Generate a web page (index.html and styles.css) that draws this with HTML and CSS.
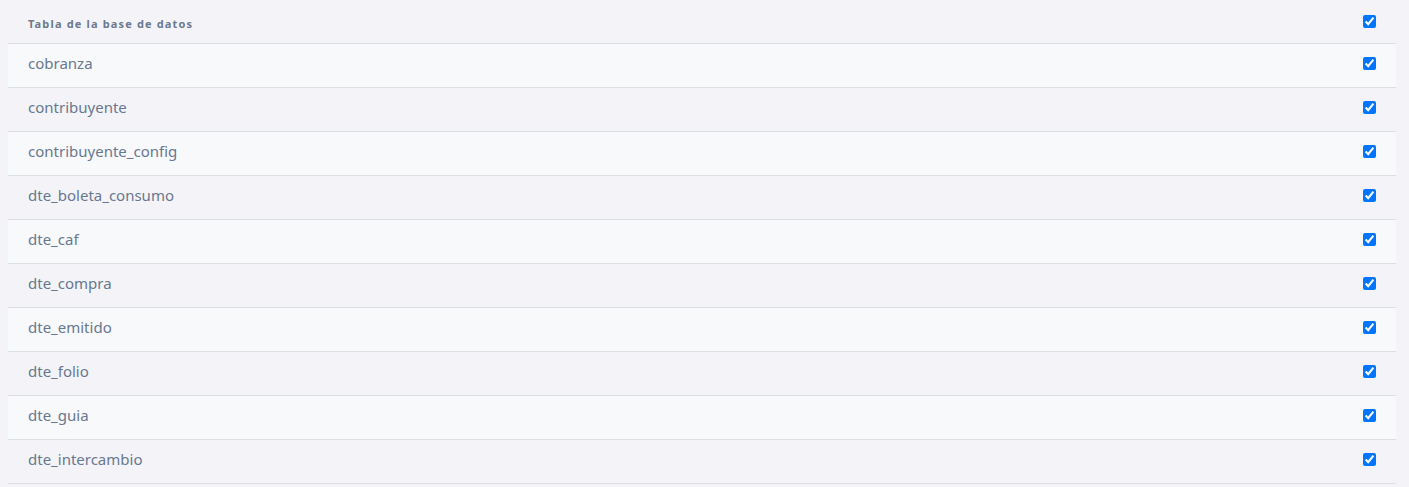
FILE: index.html
```html
<!DOCTYPE html>
<html lang="es">
<head>
<meta charset="utf-8">
<title>Tablas</title>
<link rel="stylesheet" href="styles.css">
</head>
<body>
<table class="tables">
  <thead>
    <tr>
      <th class="name-col">Tabla de la base de datos</th>
      <th class="check-col"><input type="checkbox" checked></th>
    </tr>
  </thead>
  <tbody>
    <tr><td>cobranza</td><td class="check-col"><input type="checkbox" checked></td></tr>
    <tr><td>contribuyente</td><td class="check-col"><input type="checkbox" checked></td></tr>
    <tr><td>contribuyente_config</td><td class="check-col"><input type="checkbox" checked></td></tr>
    <tr><td>dte_boleta_consumo</td><td class="check-col"><input type="checkbox" checked></td></tr>
    <tr><td>dte_caf</td><td class="check-col"><input type="checkbox" checked></td></tr>
    <tr><td>dte_compra</td><td class="check-col"><input type="checkbox" checked></td></tr>
    <tr><td>dte_emitido</td><td class="check-col"><input type="checkbox" checked></td></tr>
    <tr><td>dte_folio</td><td class="check-col"><input type="checkbox" checked></td></tr>
    <tr><td>dte_guia</td><td class="check-col"><input type="checkbox" checked></td></tr>
    <tr><td>dte_intercambio</td><td class="check-col"><input type="checkbox" checked></td></tr>
  </tbody>
</table>
</body>
</html>
```
FILE: styles.css
```css
html, body {
  background: #f4f4f8;
}
body {
  margin: 0;
  padding: 0 13px 0 8px;
  font-family: "Noto Sans", "Liberation Sans", sans-serif;
  color: #687890;
}
.tables {
  width: 100%;
  border-collapse: collapse;
}
.tables th,
.tables td {
  box-sizing: border-box;
  text-align: left;
  vertical-align: middle;
  border-bottom: 1px solid #dcdfe4;
}
.tables th {
  height: 43px;
  padding: 0 0 0 20px;
  font-size: 11px;
  font-weight: 700;
  letter-spacing: 1.15px;
  color: #6b7a8f;
}
.tables th.name-col {
  padding-top: 4px;
}
.tables td {
  height: 44px;
  padding: 0 0 4px 20px;
  font-size: 15px;
}
.tables tbody tr:nth-child(odd) {
  background: #f8f9fb;
}
.tables .check-col {
  width: 33px;
  padding-left: 0;
  text-align: left;
}
.tables input[type="checkbox"] {
  margin: 0;
  width: 13px;
  height: 13px;
  display: block;
}
```
